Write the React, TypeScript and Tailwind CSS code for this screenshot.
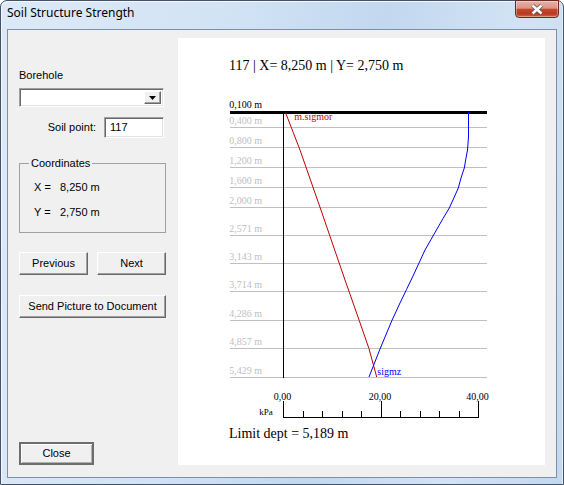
import React from "react";

const ui = "font-['Liberation_Sans',Arial,sans-serif] text-[11px] leading-[13px] text-black";
const raised =
  "bg-[#f0f0f0] border border-t-[#fff] border-l-[#fff] border-b-[#696969] border-r-[#696969] shadow-[inset_-1px_-1px_0_#a0a0a0]";
const sunken =
  "border border-t-[#a0a0a0] border-l-[#a0a0a0] border-b-[#fff] border-r-[#fff] shadow-[inset_1px_1px_0_#696969,inset_-1px_-1px_0_#e3e3e3]";

const depthLines: [string, number][] = [
  ["0,400 m", 127.5],
  ["0,800 m", 147.5],
  ["1,200 m", 167.5],
  ["1,600 m", 187.5],
  ["2,000 m", 207.5],
  ["2,571 m", 235.5],
  ["3,143 m", 263.5],
  ["3,714 m", 291.5],
  ["4,286 m", 320.5],
  ["4,857 m", 348.5],
  ["5,429 m", 377.5],
];

const ticks = Array.from({ length: 11 }, (_, k) => Math.round(283 + k * 19.5) + 0.5);

function Chart() {
  return (
    <svg width="367" height="354" viewBox="178 73 367 354" className="block">
      <g fontFamily="'Liberation Serif', 'Times New Roman', serif" fontSize="10">
        <text x="229.3" y="108.3" fill="#000">0,100 m</text>
        {depthLines.map(([label, y]) => (
          <g key={label}>
            <line x1="230" x2="487" y1={y} y2={y} stroke="#c0c0c0" strokeWidth="1" shapeRendering="crispEdges" />
            <text x="229.3" y={y - 3.5} fill="#c0c0c0">{label}</text>
          </g>
        ))}
        <rect x="230" y="111" width="257" height="3" fill="#000" />
        <line x1="283.5" x2="283.5" y1="112" y2="378" stroke="#000" strokeWidth="1" shapeRendering="crispEdges" />
        <polyline
          points="285.5,112.5 300,150 322,213 345,280 359.3,320.7 369,348.7 376.7,377"
          fill="none"
          stroke="#c00000"
          strokeWidth="1"
        />
        <polyline
          points="468.5,112 468.5,137 467.5,150 466,158 464.3,168 461.3,177 458.3,188 454.3,197 449.3,208 443,218.5 437,229 431,239.5 425,250 419,263 413,276 406.5,289.5 400,303 391.7,321 380,349 369,377"
          fill="none"
          stroke="#0000ff"
          strokeWidth="1"
          strokeLinejoin="round"
        />
        <text x="294.3" y="120" fill="#c00000">m.sigmor</text>
        <text x="377.3" y="374.5" fill="#0000ff">sigmz</text>
        <line x1="283" x2="479" y1="417.5" y2="417.5" stroke="#000" strokeWidth="1" shapeRendering="crispEdges" />
        {ticks.map((x, k) => (
          <line
            key={k}
            x1={x}
            x2={x}
            y1={k % 5 === 0 ? 401 : 411}
            y2="417.5"
            stroke="#000"
            strokeWidth="1"
            shapeRendering="crispEdges"
          />
        ))}
        <text x="282.5" y="399.5" textAnchor="middle" fill="#000">0,00</text>
        <text x="380" y="399.5" textAnchor="middle" fill="#000">20,00</text>
        <text x="477.5" y="399.5" textAnchor="middle" fill="#000">40,00</text>
        <text x="259.3" y="414.5" fontSize="9" fill="#000">kPa</text>
      </g>
    </svg>
  );
}

export default function App() {
  return (
    <div className="w-[564px] h-[485px] overflow-hidden bg-white">
      <div className="w-[564px] h-[485px] rounded-t-[7px] border border-[#41526a] bg-[linear-gradient(100deg,#dde9f7_0%,#d2e3f5_35%,#c2d8ef_60%,#d3e3f5_82%,#c3d8ee_100%)] shadow-[inset_1px_1px_0_#f4f8fd,inset_-1px_0_0_#e6eef8] flex flex-col">
        <div className="h-[28px] shrink-0 flex items-start">
          <span className="ml-[6px] mt-[4px] font-['Noto_Sans',sans-serif] text-[12px] leading-[16px] text-black">
            Soil Structure Strength
          </span>
          <div className="-mt-px ml-auto mr-[4px] w-[44px] h-[18px] rounded-b-[4px] border border-[#6b2a20] bg-[linear-gradient(to_bottom,#e8b2a8_0%,#dc9384_45%,#c6482f_52%,#b9381f_80%,#cf6a4d_100%)] shadow-[inset_0_0_0_1px_rgba(255,255,255,0.35)] flex items-center justify-center">
            <svg width="14" height="11" viewBox="0 0 14 11">
              <path d="M2.5 1.5 L11.5 9.5 M11.5 1.5 L2.5 9.5" stroke="#5e5e5e" strokeWidth="4.2" />
              <path d="M2.5 1.5 L11.5 9.5 M11.5 1.5 L2.5 9.5" stroke="#fff" strokeWidth="2.4" />
            </svg>
          </div>
        </div>
        <div className="mx-[6px] h-[449px] border border-[#7c8fa6] bg-[#f0f0f0] flex">
          <div className={`w-[170px] pl-[11px] pb-[12px] flex flex-col ${ui}`}>
            <div className="mt-[39px] h-[13px]">Borehole</div>
            <div className={`mt-[6px] w-[145px] h-[19px] bg-white flex justify-end p-[2px] ${sunken}`}>
              <div className={`w-[17px] h-full flex items-center justify-center ${raised}`}>
                <svg width="7" height="4" viewBox="0 0 7 4">
                  <path d="M0 0 H7 L3.5 4 Z" fill="#000" />
                </svg>
              </div>
            </div>
            <div className="mt-[10px] w-[145px] flex items-center justify-end gap-[8px]">
              <span>Soil point:</span>
              <div className={`w-[60px] h-[21px] bg-white pl-[5px] flex items-center ${sunken}`}>117</div>
            </div>
            <fieldset className="mt-[19px] w-[147px] border border-[#a0a0a0]">
              <legend className="ml-[9px] px-[2px] h-[13px]">Coordinates</legend>
              <div className="pl-[14px] pt-[11px] pb-[13px]">
                <div className="flex h-[13px]">
                  <span className="w-[26px]">X =</span>
                  <span>8,250 m</span>
                </div>
                <div className="flex h-[13px] mt-[12px]">
                  <span className="w-[26px]">Y =</span>
                  <span>2,750 m</span>
                </div>
              </div>
            </fieldset>
            <div className="mt-[19px] flex gap-[9px]">
              <button className={`w-[69px] h-[23px] ${raised}`}>Previous</button>
              <button className={`w-[69px] h-[23px] ${raised}`}>Next</button>
            </div>
            <button className={`mt-[20px] w-[147px] h-[23px] ${raised}`}>Send Picture to Document</button>
            <button className="mt-auto w-[75px] h-[23px] bg-[#f0f0f0] border-2 border-[#6d6d6d] shadow-[inset_1px_1px_0_#fff,inset_-1px_-1px_0_#b0b0b0]">
              Close
            </button>
          </div>
          <div className="mt-[8px] w-[367px] h-[427px] bg-white flex flex-col font-['Liberation_Serif','Times_New_Roman',serif] text-black">
            <div className="pt-[21px] pl-[51px] text-[14px] leading-[14px] h-[35px]">117 | X= 8,250 m | Y= 2,750 m</div>
            <Chart />
            <div className="pl-[51px] text-[14px] leading-[14px]">Limit dept = 5,189 m</div>
          </div>
        </div>
      </div>
    </div>
  );
}
